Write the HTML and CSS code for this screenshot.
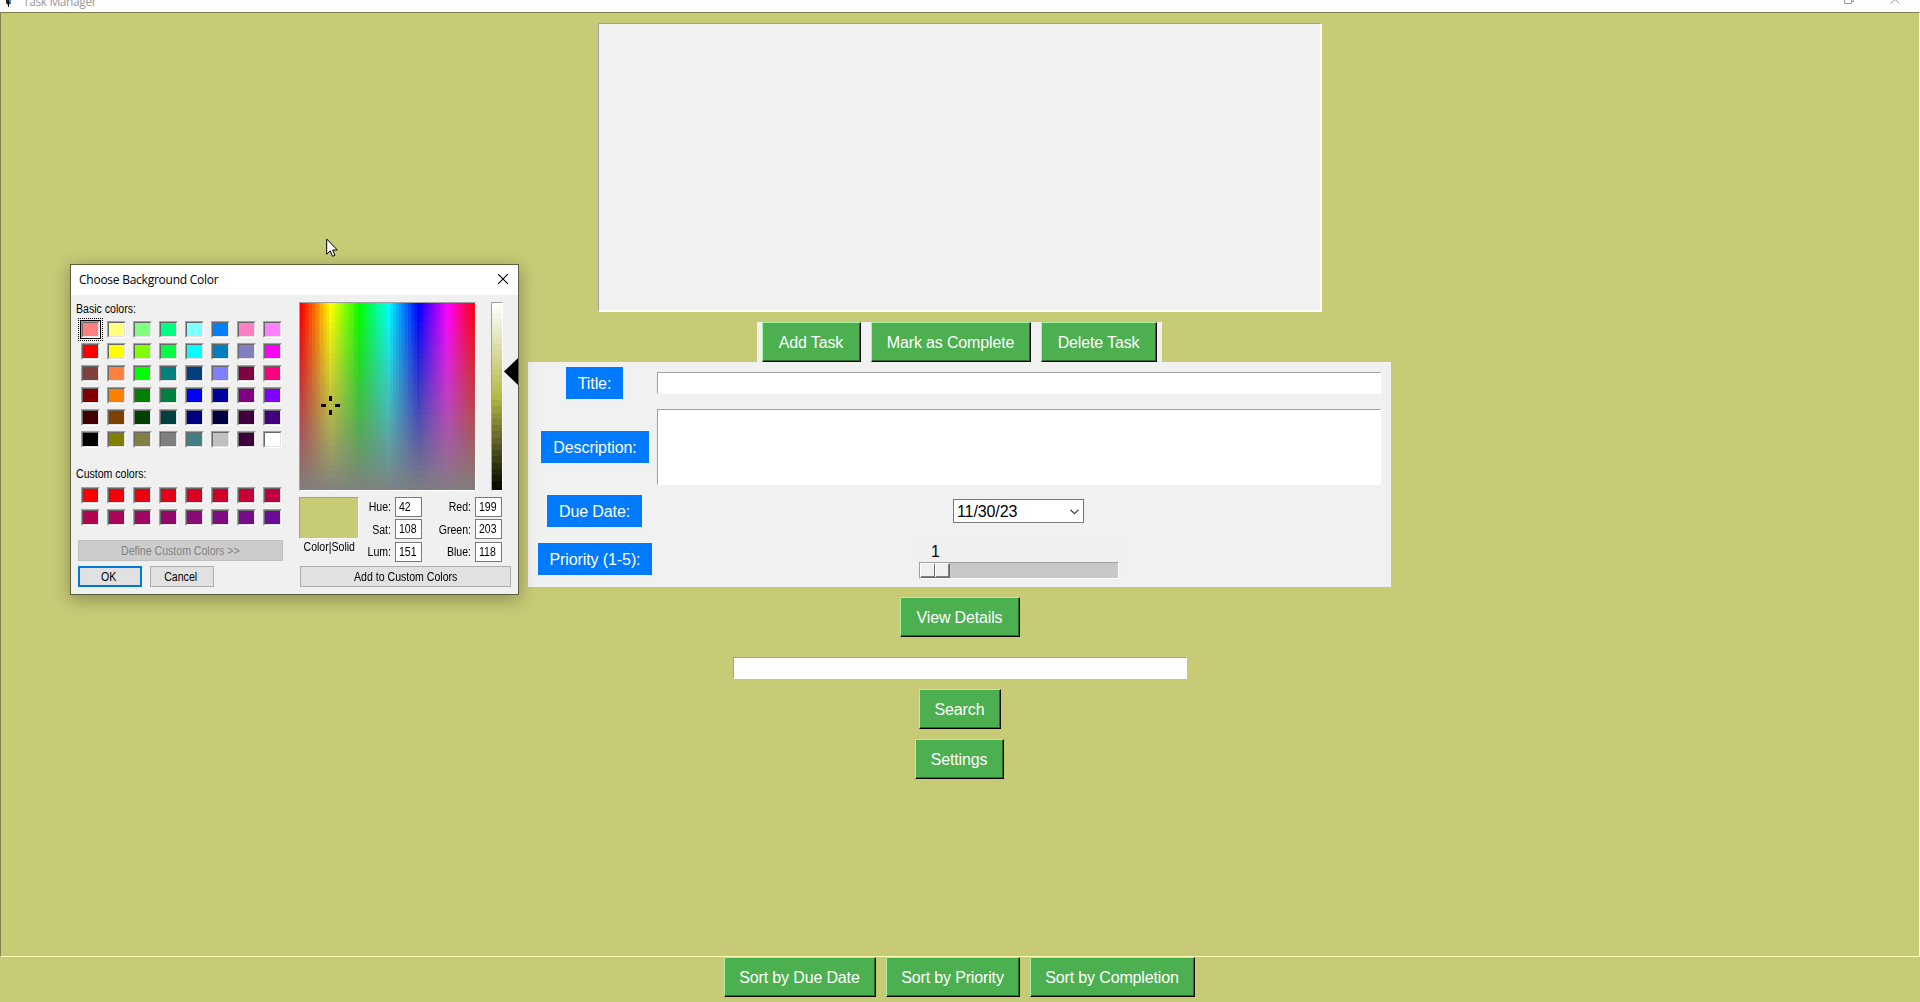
FILE: index.html
```html
<!DOCTYPE html>
<html lang="en">
<head>
<meta charset="utf-8">
<title>Task Manager</title>
<link rel="stylesheet" href="styles.css">
</head>
<body>
<div class="window">
  <header class="titlebar">
    <svg class="feather" width="8" height="8" viewBox="0 0 8 8"><path d="M1 0h5v3L3.500 5.500 1 3z" fill="#222"/><path d="M4 0h2v2L4.500 4z" fill="#3b8ee8"/><path d="M3.500 1v6" stroke="#000"/></svg>
    <span class="app-name">Task Manager</span>
    <svg class="win-buttons" width="60" height="6" viewBox="0 0 60 6" fill="none" stroke="#999"><path d="M.5 0v3.500h7V0M7.500 1.500h2V0"/><path d="M46.500 3.500L51 -.5L55.500 3.500"/></svg>
  </header>
  <main class="content">
    <div class="task-list"></div>
    <div class="toolbar">
      <button class="btn w-add">Add Task</button>
      <button class="btn w-mark">Mark as Complete</button>
      <button class="btn w-delete">Delete Task</button>
    </div>
    <div class="form">
      <label class="tag w-title">Title:</label><div class="entry"></div>
      <label class="tag w-desc">Description:</label><div class="entry tall"></div>
      <label class="tag w-date">Due Date:</label>
      <div class="date">11/30/23<svg width="9" height="6" viewBox="0 0 9 6" fill="none" stroke="#444" stroke-width="1.200"><path d="M.5 .8L4.500 4.600L8.500 .8"/></svg></div>
      <label class="tag w-prio">Priority (1-5):</label>
      <div class="scale"><span class="scale-value">1</span><div class="trough"><div class="slider"><i></i><i></i></div></div></div>
    </div>
    <button class="btn w-view">View Details</button>
    <div class="entry search-entry"></div>
    <button class="btn w-search">Search</button>
    <button class="btn w-settings">Settings</button>
  </main>
  <footer class="sortbar">
    <button class="btn w-due">Sort by Due Date</button>
    <button class="btn w-priority">Sort by Priority</button>
    <button class="btn w-completion">Sort by Completion</button>
  </footer>
</div>

<section class="dialog">
  <div class="dialog-title"><span>Choose Background Color</span>
    <svg width="10" height="10" viewBox="0 0 10 10" stroke="#000" stroke-width="1.100"><path d="M0 0L10 10M10 0L0 10"/></svg>
  </div>
  <div class="dialog-body">
    <div class="left">
      <div class="caption"><span class="t">Basic colors:</span></div>
      <div class="swatches basic" id="basic"></div>
      <div class="caption second"><span class="t">Custom colors:</span></div>
      <div class="swatches custom" id="custom"></div>
      <div class="dbtn define"><span class="t">Define Custom Colors &gt;&gt;</span></div>
      <div class="pair"><div class="dbtn ok"><span class="t">OK</span></div><div class="dbtn cancel"><span class="t">Cancel</span></div></div>
    </div>
    <div class="right">
      <div class="pickers">
        <div class="sunken spectrum"><canvas id="spectrum" width="175" height="187"></canvas>
          <svg class="cross" width="19" height="19" viewBox="0 0 19 19"><path d="M8 0h3v5H8zM8 14h3v5H8zM0 8h5v3H0zM14 8h5v3h-5z"/></svg>
        </div>
        <div class="sunken lum"><canvas id="lum" width="10" height="187"></canvas></div>
        <svg class="arrow" width="14" height="27" viewBox="0 0 14 27"><path d="M0 13.500L14 0V27z"/></svg>
      </div>
      <div class="values">
        <div class="preview"><div class="sunken chip"></div><span class="t mid">Color|Solid</span></div>
        <div class="fields first">
          <span class="t end">Hue:</span><div class="num"><span class="t">42</span></div>
          <span class="t end">Sat:</span><div class="num"><span class="t">108</span></div>
          <span class="t end">Lum:</span><div class="num"><span class="t">151</span></div>
        </div>
        <div class="fields">
          <span class="t end">Red:</span><div class="num"><span class="t">199</span></div>
          <span class="t end">Green:</span><div class="num"><span class="t">203</span></div>
          <span class="t end">Blue:</span><div class="num"><span class="t">118</span></div>
        </div>
      </div>
      <div class="dbtn add"><span class="t">Add to Custom Colors</span></div>
    </div>
  </div>
</section>
<svg class="pointer" width="13" height="20" viewBox="0 0 13 20"><path d="M.7 1V16.200L4.200 12.900L6.500 18.300L8.900 17.300L6.600 12H11.300z" fill="#fff" stroke="#000"/></svg>
<script src="picker.js"></script>
</body>
</html>
```
FILE: styles.css
```css
* { box-sizing: border-box; }
body { margin: 0; overflow: hidden; font-family: "Liberation Sans", Arial, sans-serif; font-size: 16px; background: #c7cb76; }
.window { height: 1002px; display: flex; flex-direction: column; }
.titlebar { height: 12px; background: #fff; display: flex; align-items: flex-start; padding: 0 20px 0 5px; overflow: hidden; }
.app-name { margin: -7px 0 0 10px; font: 12px/17px "Open Sans", sans-serif; color: #999; letter-spacing: -.4px; }
.win-buttons { margin-left: auto; margin-right: -4px; }
.content { height: 945px; border: 1px solid #80814c; border-right-color: #fffcb0; border-bottom-color: #fffdb8; display: flex; flex-direction: column; align-items: center; padding-top: 10px; }
.task-list { width: 724px; height: 289px; background: #f1f1f1; border: 2px solid; border-color: #a0a0a0 #fff #fff #a0a0a0; border-width: 1px 2px 2px 1px; }
.toolbar { display: flex; gap: 10px; padding: 0 5px; margin: 10px 1px 0 0; background: #f1f1f1; }
.btn { height: 40px; padding: 2px 1px 0 0; font: 16px "Liberation Sans", Arial, sans-serif; letter-spacing: -.15px; color: #fff; background: #4caf50; border: 1px solid; border-color: #a4f5a4 #000 #000 #a4f5a4; border-radius: 0; box-shadow: inset -1px -1px #2c6a2e; white-space: nowrap; text-align: center; }
.w-add { width: 99px; } .w-mark { width: 160px; } .w-delete { width: 116px; }
.w-view { width: 120px; margin-top: 10px; } .w-search { width: 82px; margin-top: 10px; } .w-settings { width: 89px; margin: 10px 1px 0 0; }
.w-due { width: 152px; } .w-priority { width: 134px; } .w-completion { width: 165px; }
.form { width: 863px; height: 225px; margin-right: 1px; background: #f1f1f1; padding: 0 10px 0 5px; display: grid; grid-template-columns: 124px 724px; grid-template-rows: 42px 86px 42px 54px; align-items: center; justify-items: center; }
.tag { height: 32px; line-height: 33px; text-align: center; background: #007bff; color: #fff; letter-spacing: -.1px; white-space: nowrap; }
.w-title { width: 57px; margin-right: 1px; } .w-desc { width: 108px; } .w-date { width: 95px; margin-right: 1px; } .w-prio { width: 114px; }
.entry { width: 724px; height: 22px; background: #fff; border: 1px solid #fff; border-top-color: #a0a0a0; border-left-color: #a0a0a0; }
.entry.tall { height: 76px; }
.search-entry { width: 454px; margin-top: 20px; }
.date { width: 131px; height: 24px; margin-right: 1px; border: 1px solid #7a7a7a; background: #fff; display: flex; justify-content: space-between; align-items: center; padding: 1px 4px 0 3px; color: #000; letter-spacing: -.1px; }
.scale { width: 206px; height: 44px; background: #f0f0f0; padding: 5px 3px 0; display: flex; flex-direction: column; }
.scale-value { height: 20px; line-height: 20px; padding-left: 12px; }
.trough { width: 200px; height: 17px; background: #c8c8c8; border: 1px solid #fff; border-top-color: #a0a0a0; border-left-color: #a0a0a0; }
.slider { width: 30px; height: 15px; display: flex; background: #f0f0f0; border: 1px solid; border-color: #fff #696969 #696969 #fff; box-shadow: inset -1px -1px #808080; }
.slider i { flex: 1; border-left: 1px solid #fff; }
.slider i:first-child { border-left: 0; border-right: 1px solid #696969; }
.sortbar { height: 45px; display: flex; justify-content: center; gap: 10px; padding-right: 1px; }

.dialog { position: absolute; left: 70px; top: 264px; width: 449px; height: 331px; border: 1px solid #5c5e3c; background: #f0f0f0; box-shadow: 0 4px 16px 1px rgba(0,0,0,.28); color: #000; font-size: 12px; }
.dialog-title { height: 30px; background: #fff; display: flex; justify-content: space-between; align-items: center; padding: 0 10px 2px 8px; font: 12px/28px "Open Sans", sans-serif; letter-spacing: -.25px; }
.dialog-title span { padding-top: 2px; }
.dialog-body { display: flex; }
.t { display: inline-block; transform: scaleX(.88); transform-origin: center; white-space: nowrap; line-height: 14px; }
.left { width: 228px; padding: 5px 0 0 7px; }
.caption { height: 18px; line-height: 18px; display: flex; align-items: center; margin-left: -2px; }
.caption .t { transform-origin: left; }
.second { margin-top: 17px; }
.swatches { display: grid; grid-template-columns: repeat(8, 19px); grid-auto-rows: 17px; gap: 5px 7px; margin-left: 3px; }
.basic { margin-top: 3px; } .custom { margin-top: 4px; }
.swatch { border: 1px solid; border-color: #a0a0a0 #fff #fff #a0a0a0; display: flex; }
.swatch i { flex: 1; border: 1px solid; border-color: #696969 #e3e3e3 #e3e3e3 #696969; }
.basic .swatch:first-child { box-shadow: 0 0 0 1px #000; outline: 1px dotted #000; outline-offset: 2px; }
.dbtn { height: 21px; background: #e1e1e1; border: 1px solid #adadad; display: flex; align-items: center; justify-content: center; }
.define { width: 205px; margin-top: 14px; background: #ccc; border-color: #bfbfbf; color: #838383; }
.pair { display: flex; gap: 8px; margin-top: 5px; }
.pair .dbtn { width: 64px; padding-right: 2px; }
.pair .ok { border: 2px solid #0078d7; }
.right { width: 219px; padding-top: 7px; }
.pickers { display: flex; height: 189px; }
.sunken { border: 1px solid; border-color: #a0a0a0 #fff #fff #a0a0a0; }
.sunken canvas { display: block; }
.spectrum { width: 177px; position: relative; }
.cross { position: absolute; left: 21px; top: 93px; }
.lum { width: 12px; margin-left: 15px; }
.arrow { margin: 56px 0 0 1px; }
.values { display: flex; margin-top: 6px; height: 69px; }
.preview { width: 60px; display: flex; flex-direction: column; align-items: center; }
.chip { width: 60px; height: 42px; background: #c7cb76; flex: none; }
.mid { margin-top: 1px; }
.fields { display: grid; grid-template-columns: 49px 27px; grid-template-rows: 20px 22px 23px; column-gap: 4px; align-items: end; }
.fields.first { grid-template-columns: 32px 27px; }
.fields .end { text-align: right; transform-origin: right; margin-bottom: 3px; }
.fields .end:nth-child(3) { margin-bottom: 2px; }
.num { height: 20px; border: 1px solid #7a7a7a; background: #fff; padding-left: 3px; display: flex; align-items: center; }
.num .t { transform-origin: left; }
.add { width: 211px; margin-left: 1px; }
.pointer { position: absolute; left: 326px; top: 238px; }
```
FILE: picker.js
```js
const basic = ("ff8080 ffff80 80ff80 00ff80 80ffff 0080ff ff80c0 ff80ff " +
  "ff0000 ffff00 80ff00 00ff40 00ffff 0080c0 8080c0 ff00ff " +
  "804040 ff8040 00ff00 008080 004080 8080ff 800040 ff0080 " +
  "800000 ff8000 008000 008040 0000ff 0000a0 800080 8000ff " +
  "400000 804000 004000 004040 000080 000040 400040 400080 " +
  "000000 808000 808040 808080 408080 c0c0c0 400040 ffffff").split(" ");
const custom = ("ff0000 f60008 ec0010 e40018 da0020 d00028 c60036 bc0042 " +
  "b2044e a80658 9e0862 94086c 8a0a76 800c82 760c8c 6a0c96").split(" ");

function fill(id, colors) {
  const root = document.getElementById(id);
  for (const c of colors) {
    const s = document.createElement("div");
    s.className = "swatch";
    const i = document.createElement("i");
    i.style.background = "#" + c;
    s.append(i);
    root.append(s);
  }
}
fill("basic", basic);
fill("custom", custom);

// Hue in 60 steps across, saturation in 30 steps down
const g = document.getElementById("spectrum").getContext("2d");
for (let x = 0; x < 60; x++) {
  for (let y = 0; y < 30; y++) {
    const x0 = Math.round(x * 175 / 60), y0 = Math.round(y * 187 / 30);
    g.fillStyle = `hsl(${x * 6}, ${100 - y * 100 / 30}%, 50%)`;
    g.fillRect(x0, y0, 4, 7);
  }
}
// Luminosity steps for the current hue and saturation
const l = document.getElementById("lum").getContext("2d");
for (let y = 0; y <= 30; y++) {
  l.fillStyle = `hsl(63, 45%, ${100 - y * 100 / 30}%)`;
  l.fillRect(0, Math.max(0, Math.round((y - .4) * 187 / 30)), 10, 7);
}
```
